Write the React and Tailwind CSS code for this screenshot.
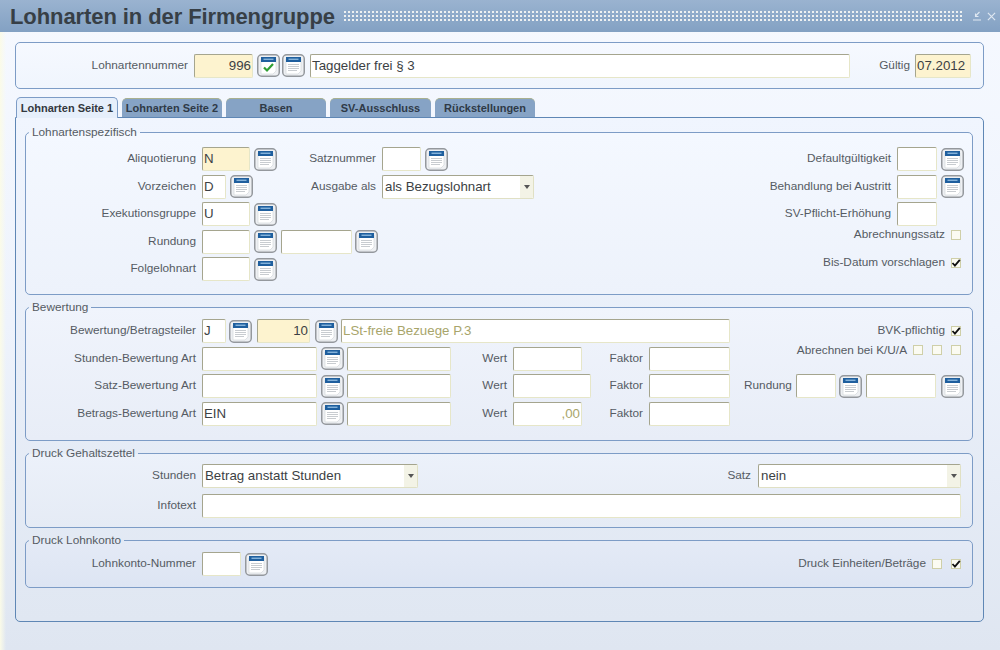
import React from "react";

const Label = ({ w, children, className = "" }) => (
  <span className={`shrink-0 text-right text-[11.8px] text-[#555b63] ${className}`} style={{ width: w }}>
    {children}
  </span>
);

function Field({ w, value, tone = "white", align = "left", muted }) {
  const bg = tone === "yellow" ? "bg-[#fdf3cf]" : "bg-white";
  return (
    <div
      className={`h-[24px] shrink-0 overflow-hidden whitespace-nowrap rounded-[2px] border border-[#e6e6c8] border-l-[#a5a58e] border-t-[#a5a58e] px-[1px] text-[13.3px] leading-[22px] ${bg} ${
        align === "right" ? "text-right" : "text-left"
      } ${muted ? "text-[#a8a56b]" : "text-[#3c3f44]"}`}
      style={{ width: w }}
    >
      {value}
    </div>
  );
}

function CalButton({ check }) {
  return (
    <svg width="23" height="23" viewBox="0 0 23 23" className="shrink-0">
      <rect x="0.75" y="0.75" width="21.5" height="21.5" rx="4" fill="#eef0f3" stroke="#94989d" strokeWidth="1.5" />
      <path d="M4 5h15v12l-3 3H4z" fill="#fff" stroke="#cfd3d7" strokeWidth="0.6" />
      <rect x="4" y="3" width="15" height="5" fill="#1f5f9e" />
      <rect x="6.5" y="4.6" width="10" height="1.3" fill="#8fbce0" />
      {check ? (
        <path d="M7 13.5l3 3 6-6.5" fill="none" stroke="#2f9e33" strokeWidth="2.2" />
      ) : (
        <path d="M6 10.5h11M6 12.5h11M6 14.5h11M6 16.5h9" stroke="#c8ccd0" strokeWidth="1" />
      )}
    </svg>
  );
}

function Checkbox({ checked }) {
  return (
    <span className="flex h-[10px] w-[10px] shrink-0 items-center justify-center border border-[#cfcfa8] bg-[#fbfbf2]">
      {checked && (
        <svg width="10" height="10" viewBox="0 0 10 10" className="shrink-0">
          <path d="M1.5 5l2.4 2.6L8.8 1.8" fill="none" stroke="#111" strokeWidth="1.8" />
        </svg>
      )}
    </span>
  );
}

function Select({ w, value }) {
  return (
    <div
      className="flex h-[24px] shrink-0 items-stretch overflow-hidden rounded-[2px] border border-[#e0e0c4] border-l-[#a5a58e] border-t-[#a5a58e] bg-white"
      style={{ width: w }}
    >
      <span className="flex-1 px-[2px] text-[13.3px] leading-[22px] text-[#3c3f44]">{value}</span>
      <span className="flex w-[13px] items-center justify-center bg-[#f3f3e6]">
        <span className="h-0 w-0 border-x-[3px] border-t-[4px] border-x-transparent border-t-[#555]" />
      </span>
    </div>
  );
}

function Section({ title, className = "", children }) {
  return (
    <fieldset className={`ml-[9px] mr-[10px] rounded-[5px] border border-[#7d9cc6] ${className}`}>
      <legend className="ml-[3px] px-[3px] text-[11.8px] leading-[12px] text-[#555b63]">{title}</legend>
      {children}
    </fieldset>
  );
}

const tabs = [
  ["Lohnarten Seite 1", "w-[102px]", true],
  ["Lohnarten Seite 2", "w-[100px]"],
  ["Basen", "w-[100px]"],
  ["SV-Ausschluss", "w-[101px]"],
  ["Rückstellungen", "w-[100px]"],
];

const bewertung = [
  ["Stunden-Bewertung Art", "", "w-[69px]", ""],
  ["Satz-Bewertung Art", "", "w-[78px]", ""],
  ["Betrags-Bewertung Art", "EIN", "w-[69px]", ",00"],
];

export default function App() {
  return (
    <div
      className="flex h-[650px] w-[1000px] flex-col overflow-hidden bg-gradient-to-b from-[#f6f9ff] via-[#eef3fc] to-[#dfe6f1] text-[#3c3f44]"
      style={{ fontFamily: '"Liberation Sans", Arial, sans-serif' }}
    >
      {/* titelleiste */}
      <div className="flex h-[32px] shrink-0 items-center bg-gradient-to-b from-[#9ab3d0] to-[#83a1c3] pl-[10px] pr-[4px]">
        <h1 className="w-[333px] shrink-0 whitespace-nowrap text-[22px] font-bold tracking-[-0.09px] text-[#373f46]">
          Lohnarten in der Firmengruppe
        </h1>
        <div className="h-[12px] flex-1 bg-[radial-gradient(circle,#eef1f2_0.8px,#4f5f74_1.1px,transparent_1.4px)] bg-[length:4px_4px]" />
        <div className="ml-[8px] flex w-[24px] shrink-0 items-center gap-[5px] text-[#dfe8f2]">
          <svg width="10" height="10" viewBox="0 0 10 10" className="shrink-0">
            <path d="M1 9h8M7.5 1L3.5 5M3.5 2.5V5.5H6.5" fill="none" stroke="currentColor" strokeWidth="1.1" />
          </svg>
          <svg width="9" height="9" viewBox="0 0 10 10" className="shrink-0">
            <path d="M1 1l8 8M9 1l-8 8" fill="none" stroke="currentColor" strokeWidth="1.3" />
          </svg>
        </div>
      </div>

      <div className="flex flex-1">
        <div className="w-[6px] shrink-0 bg-gradient-to-r from-[#fbfbe8] to-transparent" />
        <div className="flex w-[978px] shrink-0 flex-col pl-[9px] pt-[10px]">
          {/* kopf */}
          <div className="flex h-[47px] shrink-0 items-center rounded-[5px] border border-[#7d9cc6] bg-gradient-to-b from-[#f6f9ff] to-[#f0f5fd]">
            <Label w="172px">Lohnartennummer</Label>
            <div className="ml-[6px]">
              <Field w="59px" value="996" tone="yellow" align="right" />
            </div>
            <div className="ml-[4px]"><CalButton check /></div>
            <div className="ml-[2px]"><CalButton /></div>
            <div className="ml-[5px]">
              <Field w="540px" value="Taggelder frei § 3" />
            </div>
            <Label w="60px">Gültig</Label>
            <div className="ml-[5px]">
              <Field w="56px" value="07.2012" tone="yellow" />
            </div>
          </div>

          {/* reiter */}
          <div className="mt-[8px] flex h-[20px] shrink-0 items-end gap-[4px] pl-[1px]">
            {tabs.map(([label, width, active]) => (
              <div
                key={label}
                className={`${width} rounded-t-[5px] border-t text-center text-[11px] font-bold ${
                  active
                    ? "relative top-[1px] z-10 h-[21px] border-x border-[#7d9cc6] bg-[#e6effb] leading-[20px] text-[#33383e]"
                    : "h-[19px] border-[#a8b08f] bg-[#86a3c5] leading-[19px] text-[#2f3a47]"
                }`}
              >
                {label}
              </div>
            ))}
          </div>

          {/* seite */}
          <div className="flex h-[505px] w-[969px] shrink-0 flex-col rounded-b-[5px] rounded-tr-[5px] border border-[#5f87b5] bg-gradient-to-b from-[#f0f5fe] to-[#e0e7f2] pt-[8px]">
            <Section title="Lohnartenspezifisch" className="h-[169px] bg-gradient-to-b from-[#f4f8ff] to-[#edf2fb]">
              <div className="flex pt-[9px]">
                <div className="flex w-[254px] shrink-0 flex-col gap-[3.5px]">
                  <div className="flex items-center">
                    <Label w="170px">Aliquotierung</Label>
                    <div className="ml-[6px]"><Field w="48px" value="N" tone="yellow" /></div>
                    <div className="ml-[4px]"><CalButton /></div>
                  </div>
                  <div className="flex items-center">
                    <Label w="170px">Vorzeichen</Label>
                    <div className="ml-[6px]"><Field w="24px" value="D" /></div>
                    <div className="ml-[4px]"><CalButton /></div>
                  </div>
                  <div className="flex items-center">
                    <Label w="170px">Exekutionsgruppe</Label>
                    <div className="ml-[6px]"><Field w="48px" value="U" /></div>
                    <div className="ml-[4px]"><CalButton /></div>
                  </div>
                  <div className="flex items-center">
                    <Label w="170px">Rundung</Label>
                    <div className="ml-[6px]"><Field w="48px" /></div>
                    <div className="ml-[4px]"><CalButton /></div>
                    <div className="ml-[4px]"><Field w="71px" /></div>
                    <div className="ml-[3px]"><CalButton /></div>
                  </div>
                  <div className="flex items-center">
                    <Label w="170px">Folgelohnart</Label>
                    <div className="ml-[6px]"><Field w="48px" /></div>
                    <div className="ml-[4px]"><CalButton /></div>
                  </div>
                </div>
                <div className="flex flex-col gap-[3.5px]">
                  <div className="flex items-center">
                    <Label w="96px">Satznummer</Label>
                    <div className="ml-[6px]"><Field w="39px" /></div>
                    <div className="ml-[4px]"><CalButton /></div>
                  </div>
                  <div className="flex items-center">
                    <Label w="96px">Ausgabe als</Label>
                    <div className="ml-[6px]"><Select w="152px" value="als Bezugslohnart" /></div>
                  </div>
                </div>
                <div className="ml-auto flex flex-col items-end gap-[3.5px] pr-[8px]">
                  <div className="flex items-center">
                    <Label w="180px">Defaultgültigkeit</Label>
                    <div className="ml-[6px]"><Field w="40px" /></div>
                    <div className="ml-[4px]"><CalButton /></div>
                  </div>
                  <div className="flex items-center">
                    <Label w="180px">Behandlung bei Austritt</Label>
                    <div className="ml-[6px]"><Field w="40px" /></div>
                    <div className="ml-[4px]"><CalButton /></div>
                  </div>
                  <div className="flex items-center pr-[27px]">
                    <Label w="180px">SV-Pflicht-Erhöhung</Label>
                    <div className="ml-[6px]"><Field w="40px" /></div>
                  </div>
                  <div className="-mt-[2px] flex h-[14px] items-center gap-[6px] pr-[3px]">
                    <Label w="180px">Abrechnungssatz</Label>
                    <Checkbox />
                  </div>
                  <div className="mt-[11px] flex h-[14px] items-center gap-[6px] pr-[3px]">
                    <Label w="180px">Bis-Datum vorschlagen</Label>
                    <Checkbox checked />
                  </div>
                </div>
              </div>
            </Section>

            <Section title="Bewertung" className="mt-[6px] h-[140px] bg-gradient-to-b from-[#f0f4fc] to-[#e8edf7]">
              <div className="flex flex-col gap-[3.5px] pt-[6px]">
                <div className="flex items-center">
                  <Label w="170px">Bewertung/Betragsteiler</Label>
                  <div className="ml-[6px]"><Field w="24px" value="J" /></div>
                  <div className="ml-[3px]"><CalButton /></div>
                  <div className="ml-[5px]"><Field w="53px" value="10" tone="yellow" align="right" /></div>
                  <div className="ml-[5px]"><CalButton /></div>
                  <div className="ml-[3px]"><Field w="389px" value="LSt-freie Bezuege P.3" muted /></div>
                  <div className="ml-auto flex items-center gap-[6px] pr-[11px]">
                    <Label w="140px">BVK-pflichtig</Label>
                    <Checkbox checked />
                  </div>
                </div>
                {bewertung.map(([label, value, wert, wertValue], i) => (
                  <div key={label} className="flex items-center">
                    <Label w="170px">{label}</Label>
                    <div className="ml-[6px]"><Field w="115px" value={value} /></div>
                    <div className="ml-[4px]"><CalButton /></div>
                    <div className="ml-[3px]"><Field w="104px" /></div>
                    <Label w="56px">Wert</Label>
                    <div className="ml-[6px] w-[78px] shrink-0">
                      <div className={wert}>
                        <Field w="100%" value={wertValue} align="right" muted />
                      </div>
                    </div>
                    <Label w="52px">Faktor</Label>
                    <div className="ml-[6px]"><Field w="81px" /></div>
                    {i === 0 && (
                      <div className="-mt-[5px] ml-auto flex items-center gap-[9px] self-start pr-[11px]">
                        <Label w="150px" className="-mr-[3px]">Abrechnen bei K/U/A</Label>
                        <Checkbox />
                        <Checkbox />
                        <Checkbox />
                      </div>
                    )}
                    {i === 1 && (
                      <div className="ml-[14px] flex items-center">
                        <Label w="46px">Rundung</Label>
                        <div className="ml-[6px]"><Field w="40px" /></div>
                        <div className="ml-[3px]"><CalButton /></div>
                        <div className="ml-[4px]"><Field w="70px" /></div>
                        <div className="ml-[5px]"><CalButton /></div>
                      </div>
                    )}
                  </div>
                ))}
              </div>
            </Section>

            <Section title="Druck Gehaltszettel" className="mt-[6px] h-[81px] bg-gradient-to-b from-[#ecf1fa] to-[#e5ebf5]">
              <div className="flex flex-col gap-[6px] pt-[5px]">
                <div className="flex items-center">
                  <Label w="170px">Stunden</Label>
                  <div className="ml-[6px]"><Select w="216px" value="Betrag anstatt Stunden" /></div>
                  <Label w="333px">Satz</Label>
                  <div className="ml-[7px]"><Select w="203px" value="nein" /></div>
                </div>
                <div className="flex items-center">
                  <Label w="170px">Infotext</Label>
                  <div className="ml-[6px]"><Field w="759px" /></div>
                </div>
              </div>
            </Section>

            <Section title="Druck Lohnkonto" className="mt-[6px] h-[54px] bg-gradient-to-b from-[#e4eaf6] to-[#dde5f3]">
              <div className="flex items-center pt-[6px]">
                <Label w="170px">Lohnkonto-Nummer</Label>
                <div className="ml-[6px]"><Field w="39px" /></div>
                <div className="ml-[4px]"><CalButton /></div>
                <div className="ml-auto flex items-center gap-[9px] pr-[11px]">
                  <Label w="160px" className="-mr-[3px]">Druck Einheiten/Beträge</Label>
                  <Checkbox />
                  <Checkbox checked />
                </div>
              </div>
            </Section>
          </div>
        </div>
      </div>
    </div>
  );
}
